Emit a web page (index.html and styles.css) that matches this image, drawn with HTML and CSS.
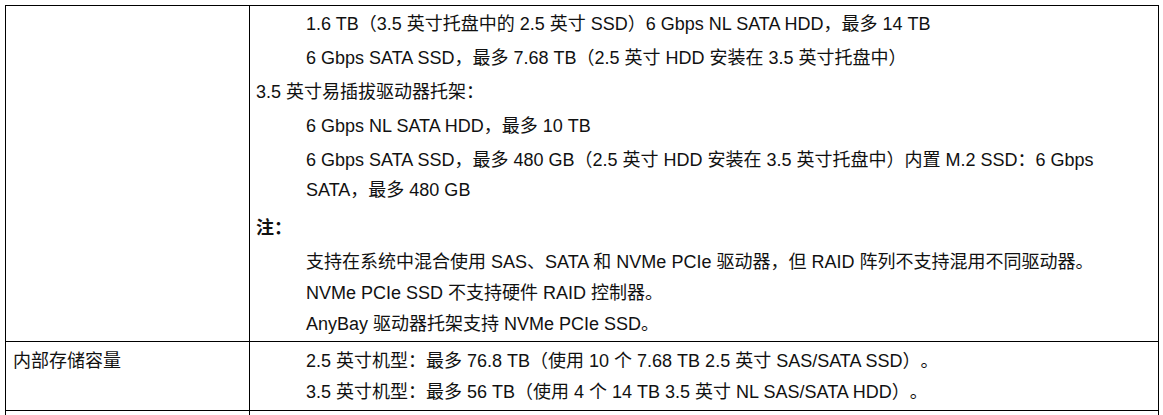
FILE: index.html
```html
<!DOCTYPE html>
<html lang="zh-CN">
<head>
<meta charset="utf-8">
<title>规格</title>
<link rel="stylesheet" href="styles.css">
</head>
<body>
<div class="spec">
  <div class="cell label r1"></div>
  <div class="cell value r1">
    <p class="ind">1.6 TB（3.5 英寸托盘中的 2.5 英寸 SSD）6 Gbps NL SATA HDD，最多 14 TB</p>
    <p class="ind">6 Gbps SATA SSD，最多 7.68 TB（2.5 英寸 HDD 安装在 3.5 英寸托盘中）</p>
    <p>3.5 英寸易插拔驱动器托架：</p>
    <p class="ind">6 Gbps NL SATA HDD，最多 10 TB</p>
    <p class="ind">6 Gbps SATA SSD，最多 480 GB（2.5 英寸 HDD 安装在 3.5 英寸托盘中）内置 M.2 SSD：6 Gbps SATA，最多 480 GB</p>
    <p class="note">注：</p>
    <p class="ind">支持在系统中混合使用 SAS、SATA 和 NVMe PCIe 驱动器，但 RAID 阵列不支持混用不同驱动器。</p>
    <p class="ind tight">NVMe PCIe SSD 不支持硬件 RAID 控制器。</p>
    <p class="ind tight">AnyBay 驱动器托架支持 NVMe PCIe SSD。</p>
  </div>
  <div class="cell label r2"><p>内部存储容量</p></div>
  <div class="cell value r2">
    <p class="ind">2.5 英寸机型：最多 76.8 TB（使用 10 个 7.68 TB 2.5 英寸 SAS/SATA SSD）。</p>
    <p class="ind tight1">3.5 英寸机型：最多 56 TB（使用 4 个 14 TB 3.5 英寸 NL SAS/SATA HDD）。</p>
  </div>
  <div class="cell label r3"></div>
  <div class="cell value r3"></div>
</div>
</body>
</html>
```
FILE: styles.css
```css
html, body {
  margin: 0;
  padding: 0;
  background: #fff;
  overflow: hidden;
}
body {
  padding: 5px 0 0 5px;
  font-family: "Liberation Sans", "Noto Sans CJK SC", sans-serif;
  font-size: 18px;
  color: #111;
  text-spacing-trim: space-all;
}
.spec {
  display: grid;
  grid-template-columns: 244px 909px;
  border-left: 1px solid #000;
  border-top: 1px solid #000;
  width: 1153px;
}
.cell {
  border-right: 1px solid #000;
  border-bottom: 1px solid #000;
}
.label {
  padding-left: 7px;
}
.value {
  padding-left: 6px;
  padding-right: 8px;
}
.r1 {
  padding-top: 3px;
  padding-bottom: 2px;
}
.r2 {
  padding-top: 4px;
  padding-bottom: 3px;
}
.r3 {
  height: 40px;
}
p {
  margin: 4px 0 0;
  line-height: 30px;
}
p:first-child {
  margin-top: 0;
}
.ind {
  padding-left: 50px;
}
.note {
  margin-top: 8px;
  font-weight: bold;
}
.tight {
  margin-top: 1px;
}
.tight1 {
  margin-top: 1px;
}
```
